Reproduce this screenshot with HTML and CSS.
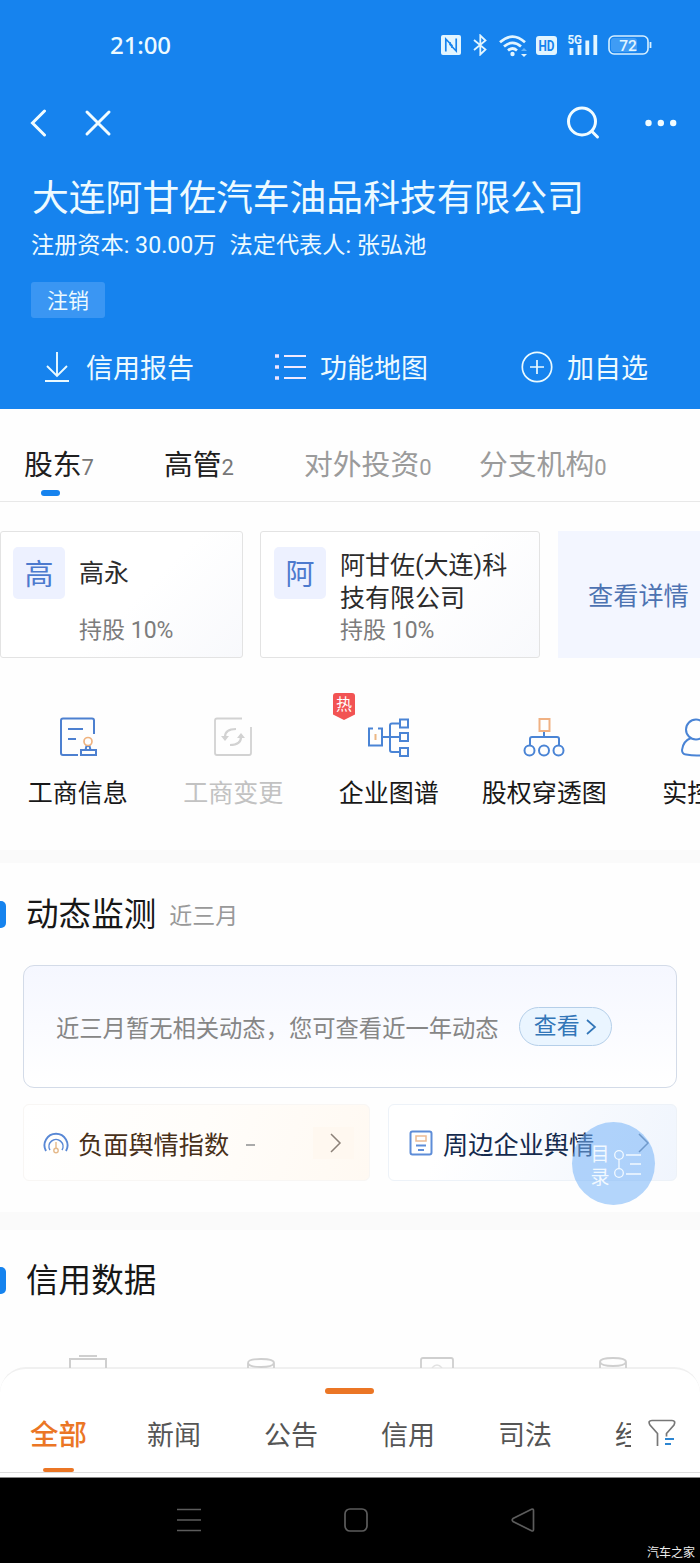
FILE: index.html
```html
<!DOCTYPE html>
<html lang="zh-CN">
<head>
<meta charset="utf-8">
<title>大连阿甘佐汽车油品科技有限公司</title>
<link rel="stylesheet" href="styles.css">
</head>
<body>
<div class="phone">
  <header class="hero">
    <div class="status">
      <span class="clock">21:00</span>
      <svg class="nfc" width="20" height="20" viewBox="0 0 20 20"><rect width="20" height="20" rx="2" fill="#e2f5ff"/><path d="M4.800 16.500V4l6.200 6.500V13M15.200 3.500V16L9 9.500V7" fill="none" stroke="#1683ee" stroke-width="1.700"/></svg>
      <svg class="bt" width="14" height="22" viewBox="0 0 14 22"><path d="M1 6l11.500 9.500L7.300 20.500V1.500l5.200 5L1 16" fill="none" stroke="#e2f5ff" stroke-width="1.800"/></svg>
      <svg class="wifi" width="29" height="23" viewBox="0 0 29 23"><g fill="none" stroke="#e2f5ff" stroke-width="2.700"><path d="M1 8.300Q13.500 -3 26 8.300M5 12.600Q13.500 5 22 12.600M9 16.500Q13.500 12.500 18 16.500"/></g><circle cx="13.500" cy="20" r="2.200" fill="#e2f5ff"/><path d="M22 20h6l-3 3z" fill="#e2f5ff"/><path d="M22 17h6l-3-3z" fill="#65b4fa"/></svg>
      <svg class="hd" width="21" height="19" viewBox="0 0 21 19"><rect width="21" height="19" rx="3" fill="#e2f5ff"/><text x="10.500" y="14.500" text-anchor="middle" font-size="14" font-weight="700" textLength="16" lengthAdjust="spacingAndGlyphs" fill="#1683ee">HD</text></svg>
      <svg class="signal" width="31" height="24" viewBox="0 0 31 24"><text x="0.500" y="10.500" font-size="12.500" font-weight="700" textLength="14.500" lengthAdjust="spacingAndGlyphs" fill="#e2f5ff">5G</text><path d="M4.500 15v7M12.500 12v10M20.300 7.500V22M28.300 2V22" stroke="#e2f5ff" stroke-width="3.800"/></svg>
      <svg class="battery" width="44" height="20" viewBox="0 0 44 20"><rect x="1" y="1" width="39" height="18" rx="5" fill="none" stroke="#d8f0ff" stroke-width="1.600"/><rect x="3" y="3" width="26" height="14" rx="3" fill="#3f9cf5"/><path d="M42.500 7v6" stroke="#d8f0ff" stroke-width="1.800"/><text x="20" y="15.500" text-anchor="middle" font-size="15.500" font-weight="500" textLength="17.500" fill="#e2f5ff">72</text></svg>
    </div>
    <nav class="navbar">
      <svg width="18" height="28" viewBox="0 0 18 28"><path d="M15.500 2L3.500 14l12 12" class="wline"/></svg>
      <svg class="close" width="28" height="28" viewBox="0 0 28 28"><path d="M3 3l22 22M25 3L3 25" class="wline"/></svg>
      <svg class="search" width="34" height="34" viewBox="0 0 34 34"><circle cx="16" cy="15.500" r="13.500" class="wline"/><path d="M26 25.500l5.500 5.500" class="wline"/></svg>
      <svg class="more" width="32" height="8" viewBox="0 0 32 8"><g fill="#f1fcff"><circle cx="3.500" cy="4" r="3.200"/><circle cx="15.800" cy="4" r="3.200"/><circle cx="28.200" cy="4" r="3.200"/></g></svg>
    </nav>
    <h1>大连阿甘佐汽车油品科技有限公司</h1>
    <p class="meta"><span>注册资本: 30.00万</span><span>法定代表人: 张弘池</span></p>
    <span class="chip">注销</span>
    <div class="actions">
      <a><svg width="26" height="32" viewBox="0 0 26 32"><path d="M13 1v24M3 15l10 10 10-10M1 30h24" fill="none" stroke="#eafaff" stroke-width="1.900"/></svg>信用报告</a>
      <a><svg width="33" height="28" viewBox="0 0 33 28"><path d="M10 3h22M10 14h22M10 25h22" stroke="#f0eaff" stroke-width="2"/><path d="M1 3h4M1 14h4M1 25h4" stroke="#eee4ff" stroke-width="3.400"/></svg>功能地图</a>
      <a><svg width="32" height="32" viewBox="0 0 32 32"><circle cx="16" cy="16" r="14.700" fill="none" stroke="#eafaff" stroke-width="1.700"/><path d="M9 16h14M16 9v14" stroke="#eafaff" stroke-width="1.700"/></svg>加自选</a>
    </div>
  </header>

  <nav class="tabs">
    <a class="on">股东<small>7</small></a><a class="on">高管<small>2</small></a><a>对外投资<small>0</small></a><a>分支机构<small>0</small></a>
  </nav>

  <div class="holders">
    <article class="holder">
      <span class="avatar">高</span>
      <div class="info"><h3 class="single">高永</h3><p>持股 10%</p></div>
    </article>
    <article class="holder wide">
      <span class="avatar">阿</span>
      <div class="info"><h3>阿甘佐(大连)科<br>技有限公司</h3><p>持股 10%</p></div>
    </article>
    <a class="detail">查看详情</a>
  </div>

  <div class="grid">
    <a><svg width="42" height="42" viewBox="0 0 42 42"><g fill="none" stroke="#4d80d0" stroke-width="2"><path d="M37 18V4.500Q37 2.500 35 2.500H6Q4 2.500 4 4.500V37q0 2 2 2h15M11 13h15M11 23h8"/><path d="M24 34h15v5H24zM28.500 34l1-4h3l1 4"/><circle cx="31" cy="25.500" r="4" stroke="#efb27e" stroke-width="1.700"/></g></svg>工商信息</a>
    <a class="off"><svg width="42" height="42" viewBox="0 0 42 42"><g fill="none" stroke="#d2d2d2" stroke-width="1.800"><path d="M30 2.500H5q-2 0-2 2V37q0 2 2 2h32q2 0 2-2V11"/><path d="M13 21q0-8 11-8M29 21q0 8-11 8" stroke-width="2.200"/></g><path d="M9 20h8l-4 5zM25 22h8l-4-5z" fill="#d2d2d2"/></svg>工商变更</a>
    <a class="hot"><span class="flame">热</span><svg width="42" height="42" viewBox="0 0 42 42"><g fill="none" stroke="#4a84d5" stroke-width="2"><path d="M5 12.500H1v17h13v-17h-4M14 21h18M32 7.500h-8q-2 0-2 2V34q0 2 2 2h8"/><path d="M32 3.500h8v8h-8zM32 17h8v8h-8zM32 32h8v8h-8z"/></g><path d="M7.500 18v6" stroke="#edb783" stroke-width="2"/></svg>企业图谱</a>
    <a><svg width="42" height="42" viewBox="0 0 42 42"><g fill="none" stroke="#4a84d5" stroke-width="2"><path d="M21 15v6M7 30v-7q0-2 2-2h25q2 0 2 2v7"/><circle cx="6.500" cy="34.500" r="5"/><circle cx="21" cy="34.500" r="5"/><circle cx="35.500" cy="34.500" r="5"/><path d="M16.500 3h10v12h-10z" stroke="#f0b183"/></g></svg>股权穿透图</a>
    <a><svg width="42" height="42" viewBox="0 0 42 42"><g fill="none" stroke="#4a84d5" stroke-width="2"><circle cx="17" cy="13.500" r="10"/><path d="M12 22Q4 25 3 34q0 4 4 4.500 11 2 22 0 4-.5 4-4.500-1-9-9-12"/></g></svg>实控人</a>
  </div>

  <section class="monitor">
    <h2>动态监测<small>近三月</small></h2>
    <div class="notice"><span>近三月暂无相关动态，您可查看近一年动态</span><a>查看<svg width="11" height="18" viewBox="0 0 11 18"><path d="M1 2l8 7-8 7" fill="none" stroke="#3276b8" stroke-width="1.700"/></svg></a></div>
    <div class="links">
      <a class="warm"><svg width="26" height="22" viewBox="0 0 26 22"><g fill="none" stroke="#5988d5" stroke-width="1.900"><path d="M3 19a11.500 11.500 0 1 1 20 0"/><path d="M7 18a7 7 0 1 1 12 0" stroke-width="1.500"/></g><g fill="none" stroke="#e5b98a" stroke-width="1.400"><circle cx="13" cy="18.500" r="2.200"/><path d="M13 10v6"/></g></svg>负面舆情指数<i>-</i><span class="arrow"><svg width="14" height="20" viewBox="0 0 14 20"><path d="M2 1l9 9-9 9" fill="none" stroke="#8c8178" stroke-width="1.500"/></svg></span></a>
      <a class="cool"><svg width="24" height="26" viewBox="0 0 24 26"><g fill="none" stroke="#5e8dd8"><rect x="1.500" y="1.500" width="21" height="23" rx="2" stroke-width="2"/><path d="M7 15.500h10M9 20h6" stroke-width="1.800"/><rect x="7" y="6" width="10" height="5" stroke="#edbb92" stroke-width="1.500"/></g></svg>周边企业舆情<span class="arrow"><svg width="14" height="20" viewBox="0 0 14 20"><path d="M2 1l9 9-9 9" fill="none" stroke="#6b7c98" stroke-width="1.500"/></svg></span></a>
      <div class="catalog"><span>目<br>录</span><svg width="30" height="32" viewBox="0 0 30 32"><g fill="none" stroke="#f2f9ff" stroke-width="1.300"><circle cx="6" cy="7" r="4.300"/><circle cx="6" cy="25" r="4.300"/><path d="M6 11.300v9.400M13 7h15M17 16h11M13 26h15"/></g></svg></div>
    </div>
  </section>

  <section class="credit">
    <h2>信用数据</h2>
    <div class="peek">
      <svg width="40" height="14" viewBox="0 0 40 14"><path d="M11 2h18M2 14V5h36v9" fill="none" stroke="#cfcfcf" stroke-width="2"/></svg>
      <svg width="30" height="14" viewBox="0 0 30 14"><path d="M2 14V9q0-4 13-4t13 4v5M2 9q1 4 13 4t13-4" fill="none" stroke="#cfcfcf" stroke-width="1.800"/></svg>
      <svg width="36" height="14" viewBox="0 0 36 14"><path d="M2 14V6q0-2 2-2h28q2 0 2 2v8" fill="none" stroke="#cfcfcf" stroke-width="1.800"/><path d="M13 14q5-6 10 0" fill="none" stroke="#e2e2e2" stroke-width="1.500"/></svg>
      <svg width="30" height="14" viewBox="0 0 30 14"><path d="M2 14V8q0-4 13-4t13 4v6M2 8q1 4 13 4t13-4" fill="none" stroke="#cfcfcf" stroke-width="1.800"/></svg>
    </div>
  </section>

  <section class="sheet">
    <div class="grip"></div>
    <div class="feeds">
      <a class="active">全部</a><a>新闻</a><a>公告</a><a>信用</a><a>司法</a><a class="cut">经营</a>
      <svg width="28" height="28" viewBox="0 0 28 28"><path d="M9.500 27V14.500L2 6Q-.5 1.500 4 1.500h20q4 0 2 4.500l-7.500 8.500v3" fill="none" stroke="#777" stroke-width="1.700"/><path d="M17 20h9M17 25h6" stroke="#2d86d2" stroke-width="2"/></svg>
    </div>
  </section>

  <footer class="system">
    <svg width="24" height="24" viewBox="0 0 24 24"><path d="M0 1.500h24M0 12h24M0 22.500h24"/></svg>
    <svg width="24" height="24" viewBox="0 0 24 24"><rect x="1" y="1" width="22" height="22" rx="5"/></svg>
    <svg width="24" height="24" viewBox="0 0 24 24"><path d="M2 10.500L20.500 1.200q2-.6 2 1.300v19q0 2-2 1.300L2 13.500q-1.500-1.500 0-3z"/></svg>
    <span class="credit-mark">汽车之家</span>
  </footer>
</div>
</body>
</html>
```
FILE: styles.css
```css
* { box-sizing: border-box; }
body, h1, h2, h3, p { margin: 0; font-weight: 400; }
body { font-family: Roboto, "Noto Sans CJK SC", sans-serif; background: #fff; }
svg { display: block; flex: none; }
a, span { white-space: nowrap; }
.phone { width: 700px; height: 1563px; overflow: hidden; background: #fefefe; }

.hero { height: 409px; background: #1683ee; color: #edfaff; }
.status { height: 90px; padding: 0 48px 0 110px; display: flex; align-items: center; }
.clock { font: 500 24px/30px "Noto Sans", sans-serif; width: 332px; padding-bottom: 1px; letter-spacing: -0.1px; }
.bt { margin-left: 12px; }
.wifi { margin-left: 12px; }
.hd { margin-left: 8px; }
.signal { margin-left: 10px; }
.battery { margin-left: 10px; }
.navbar { height: 65px; padding: 0 23px 0 29px; display: flex; align-items: center; }
.wline { fill: none; stroke: #f1fcff; stroke-width: 3; stroke-linecap: round; }
.close { margin-left: 37px; }
.search { margin-left: auto; }
.more { margin-left: 45px; }
h1 { height: 76px; padding-left: 32px; font-size: 36.800px; line-height: 87px; white-space: nowrap; }
.meta { height: 30px; padding-left: 31px; display: flex; gap: 13px; font-size: 23.200px; line-height: 29px; }
.chip { display: block; width: 74px; height: 36px; margin: 21px 0 0 31px; background: #3a96f3; border-radius: 3px; font-size: 21px; line-height: 38px; text-align: center; }
.actions { height: 97px; display: flex; }
.actions a { display: flex; align-items: center; font-size: 27px; }
.actions a:nth-child(1) { width: 230px; padding-left: 44px; gap: 16px; }
.actions a:nth-child(2) { width: 291px; padding-left: 44px; gap: 13px; }
.actions a:nth-child(3) { gap: 14px; }

.tabs { height: 93px; padding: 34px 0 0 24px; display: flex; border-bottom: 1px solid #e8e8e8; color: #9b9b9b; font-size: 28.800px; line-height: 44px; }
.tabs small { font-size: 22px; }
.tabs a { width: 175px; }
.tabs .on { width: 140px; color: #202020; }
.tabs .on small { color: #777; }
.tabs a:first-child::after { content: ""; display: block; width: 19px; height: 6px; margin: 0 0 0 17px; border-radius: 3px; background: #1683ee; }

.holders { height: 155px; padding-top: 29px; display: flex; }
.holder { width: 243px; height: 127px; margin-right: 17px; padding: 15px 0 0 12px; display: flex; flex: none; gap: 14px; border: 1px solid #e3e3e3; border-radius: 3px; background: linear-gradient(135deg, #fff 55%, #f8f9fc); }
.wide { width: 280px; padding-left: 13px; }
.avatar { width: 52px; height: 52px; border-radius: 5px; background: #edf1ff; color: #4d7ace; font-size: 29px; line-height: 56px; text-align: center; }
.info { padding-top: 2px; color: #2c2c2c; }
.info h3 { height: 65px; font-size: 25px; line-height: 33px; white-space: nowrap; }
.info .single { padding-top: 8px; }
.info p { color: #7c7c7c; font-size: 23px; line-height: 33px; }
.detail { width: 160px; height: 127px; margin-left: 1px; padding-left: 30px; flex: none; background: #f3f6ff; color: #4d73b2; font-size: 25.200px; line-height: 132px; }

.grid { height: 193px; padding-top: 59px; display: grid; grid-template-columns: repeat(5, 155.500px); }
.grid a { position: relative; display: flex; flex-direction: column; align-items: center; gap: 18px; color: #181818; font-size: 25px; line-height: 36px; }
.grid .off { color: #c2c2c2; }
.flame { position: absolute; left: 22px; top: -23px; width: 22px; height: 27px; background: #f25353; border-radius: 3px; color: #fff; font-size: 16px; line-height: 24px; text-align: center; clip-path: polygon(0 0, 100% 0, 100% 80%, 50% 100%, 0 80%); }

section h2 { display: flex; align-items: center; height: 50px; color: #171717; font-size: 32.600px; line-height: 48px; padding-top: 2px; }
h2::before { content: ""; width: 6px; height: 27px; margin: 0 20px 2px 0; border-radius: 0 5px 5px 0; background: #1683ee; }
h2 small { margin: 3px 0 0 13px; color: #999; font-size: 23px; }
.monitor { height: 362px; padding-top: 26px; border-top: 13px solid #fafafa; }
.notice { width: 654px; height: 123px; margin: 26px 0 16px 23px; padding-left: 32px; display: flex; align-items: center; border: 1px solid #d3dbe8; border-radius: 11px; background: linear-gradient(#f5f7ff, #fff); color: #868686; font-size: 23.300px; }
.notice a { width: 93px; height: 39px; margin-left: 20px; display: flex; align-items: center; justify-content: center; gap: 6px; border: 1px solid #b5cfe9; border-radius: 20px; background: #eaf5ff; color: #3276b8; font-size: 23px; line-height: 37px; }
.links { position: relative; display: flex; gap: 18px; padding-left: 23px; }
.links > a { height: 77px; display: flex; align-items: center; border: 1px solid #f8f6f4; border-radius: 6px; font-size: 25.200px; }
.links .warm { width: 347px; padding-left: 19px; gap: 9px; color: #483019; background: linear-gradient(110deg, #fff, #fffdfa 50%, #fff9f2); }
.links i { width: 9px; height: 2px; margin: 4px 0 0 8px; background: #aaa; color: transparent; font-size: 2px; line-height: 2px; }
.arrow { margin-left: auto; }
.warm .arrow { margin-right: 15px; padding: 6px 11px 6px 16px; background: #fff8f0; }
.links .cool { width: 289px; padding-left: 20px; gap: 10px; color: #142a4d; background: linear-gradient(110deg, #fff 20%, #f0f5fd); border-color: #edf2f8; }
.cool .arrow { margin-right: 25px; }
.catalog { position: absolute; left: 572px; top: 18px; width: 83px; height: 83px; padding: 4px 0 0 6px; display: flex; align-items: center; justify-content: center; gap: 3px; border-radius: 50%; background: rgba(117, 179, 248, .55); color: #f2f9ff; font-size: 19px; line-height: 23px; }
.catalog svg { margin-bottom: 3px; }

.credit { height: 155px; padding-top: 25px; border-top: 18px solid #fafafa; }
.peek { margin-top: 49px; height: 14px; padding-left: 68px; display: flex; }
.peek svg:nth-child(2) { margin-left: 138px; }
.peek svg:nth-child(3) { margin-left: 143px; }
.peek svg:nth-child(4) { margin-left: 143px; }

.sheet { height: 110px; padding-top: 19px; border: 2px solid #f0f0f0; border-width: 2px 0 0; border-radius: 26px 26px 0 0; background: #fff; }
.grip { width: 49px; height: 6px; margin-left: 325px; border-radius: 3px; background: #eb7625; }
.feeds { height: 79px; padding-left: 30px; display: flex; border-bottom: 1px solid #ddd; color: #555; font-size: 27px; line-height: 84px; }
.feeds a { width: 117px; flex: none; }
.feeds .active { color: #eb7625; font-size: 28.500px; font-weight: 500; }
.active::after { content: ""; display: block; width: 31px; height: 4px; margin: -10px 0 0 13px; border-radius: 2px; background: #eb7625; }
.feeds .cut { width: 16px; overflow: hidden; }
.feeds svg { margin: 25px 0 0 17px; }

.system { height: 86px; padding: 30px 3px 0 177px; display: flex; border-top: 1px solid #888; background: #000; }
.system svg { margin-right: 143px; fill: none; stroke: #5c5c5c; stroke-width: 1.700; }
.system svg:nth-of-type(3) { margin-right: 112px; }
.credit-mark { margin-top: 36px; color: #eee; font-size: 12px; line-height: 18px; }
```
